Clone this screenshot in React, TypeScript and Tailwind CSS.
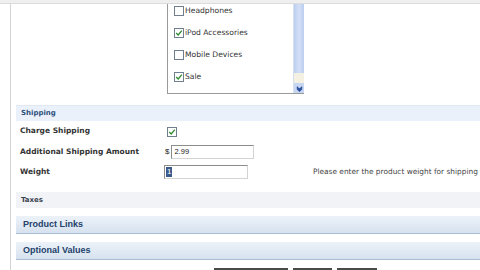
import React from "react";

function Box({ checked }: { checked?: boolean }) {
  return (
    <span className="inline-flex h-[10px] w-[10px] shrink-0 items-center justify-center border border-[#6f7f8f] bg-white">
      {checked && (
        <svg viewBox="0 0 10 10" className="h-[8px] w-[8px]">
          <path d="M1.5 5 L4 7.5 L8.5 2" fill="none" stroke="#2f8a2f" strokeWidth="1.6" />
        </svg>
      )}
    </span>
  );
}

const categories = [
  { name: "Headphones", checked: false },
  { name: "iPod Accessories", checked: true },
  { name: "Mobile Devices", checked: false },
  { name: "Sale", checked: true },
];

function Band({ title, big, light }: { title: string; big?: boolean; light?: boolean }) {
  if (big) {
    return (
      <div className="flex h-[18px] items-center border-b border-[#a9bcd3] bg-gradient-to-b from-[#edf2f9] to-[#d6e2ef] pl-[7px] font-['Liberation_Sans',sans-serif] text-[9px] font-bold text-[#23416a]">
        {title}
      </div>
    );
  }
  return (
    <div
      className={
        "flex h-[16px] items-center pl-[5px] font-['DejaVu_Sans',sans-serif] text-[7px] font-bold " +
        (light ? "bg-[#f2f3f6] text-[#3a4350]" : "border-t border-[#e2e8f1] bg-[#ebf1fa] text-[#2d4f7c]")
      }
    >
      {title}
    </div>
  );
}

export default function App() {
  return (
    <div className="relative h-[270px] w-[480px] overflow-hidden bg-white font-['DejaVu_Sans',sans-serif] text-[#222]">
      <div className="h-[4px] border-b border-[#dcdcdc] bg-[#efefef]" />
      <div className="ml-[10px] h-[266px] border-l border-[#d5d5d5] pl-[5px]">
        {/* category list */}
        <div className="ml-[151px] flex h-[90px] w-[137px] overflow-hidden border-b border-l border-[#9a9a9a]">
          <div className="mt-[-4px] flex flex-1 flex-col">
            {categories.map((c) => (
              <div key={c.name} className="flex h-[22px] items-center gap-[1px] pl-[6px] text-[7.6px] text-[#333]">
                <Box checked={c.checked} />
                <span>{c.name}</span>
              </div>
            ))}
          </div>
          <div className="flex w-[11px] flex-col border-l border-[#d6e0ee] bg-[#c9d8f2]">
            <div className="flex-1 bg-gradient-to-r from-[#bccff0] via-[#d3dff5] to-[#bccff0]" />
            <div className="h-[10px] bg-[#f4f1e3]" />
            <div className="flex h-[10px] items-center justify-center bg-[#c7d6f2]">
              <svg viewBox="0 0 8 8" className="h-[7px] w-[7px]">
                <path d="M1 2 L4 5 L7 2 M1 4 L4 7 L7 4" fill="none" stroke="#2a4f9a" strokeWidth="1.3" />
              </svg>
            </div>
          </div>
        </div>

        <div className="mt-[11px]">
          <Band title="Shipping" />
          <div className="flex h-[20px] items-center">
            <div className="w-[146px] pl-[4px] text-[7.5px] font-bold text-[#333]">Charge Shipping</div>
            <div className="pl-[5px]">
              <Box checked />
            </div>
          </div>
          <div className="flex h-[21px] items-center">
            <div className="w-[146px] pl-[4px] text-[7.5px] font-bold text-[#333]">Additional Shipping Amount</div>
            <span className="pl-[3px] pr-[2px] font-['Liberation_Sans',sans-serif] text-[8px]">$</span>
            <div className="flex h-[14px] w-[83px] items-center border border-[#8c8c8c] border-b-[#d4d4d4] border-r-[#d4d4d4] pl-[2px] font-['Liberation_Sans',sans-serif] text-[7.5px]">
              2.99
            </div>
          </div>
          <div className="flex h-[20px] items-center">
            <div className="w-[146px] pl-[4px] text-[7.5px] font-bold text-[#333]">Weight</div>
            <div className="ml-[2px] flex h-[14px] w-[84px] items-center border border-[#8c8c8c] border-b-[#d4d4d4] border-r-[#d4d4d4] pl-[1px]">
              <span className="bg-[#3a5a8c] px-[1px] font-['Liberation_Sans',sans-serif] text-[8px] leading-[10px] text-white">1</span>
            </div>
            <div className="ml-[65px] whitespace-nowrap text-[7.4px] text-[#444]">
              Please enter the product weight for shipping
            </div>
          </div>
        </div>

        <div className="mt-[10px]">
          <Band title="Taxes" light />
        </div>
        <div className="mt-[8px]">
          <Band title="Product Links" big />
        </div>
        <div className="mt-[8px]">
          <Band title="Optional Values" big />
        </div>

        <div className="mt-[8px] flex gap-[5px] pl-[198px]">
          <div className="h-[10px] w-[74px] border-2 border-[#4a4a4a] bg-[#e6e6e6]" />
          <div className="h-[10px] w-[39px] border-2 border-[#4a4a4a] bg-[#e6e6e6]" />
          <div className="h-[10px] w-[40px] border-2 border-[#4a4a4a] bg-[#e6e6e6]" />
        </div>
      </div>
    </div>
  );
}
